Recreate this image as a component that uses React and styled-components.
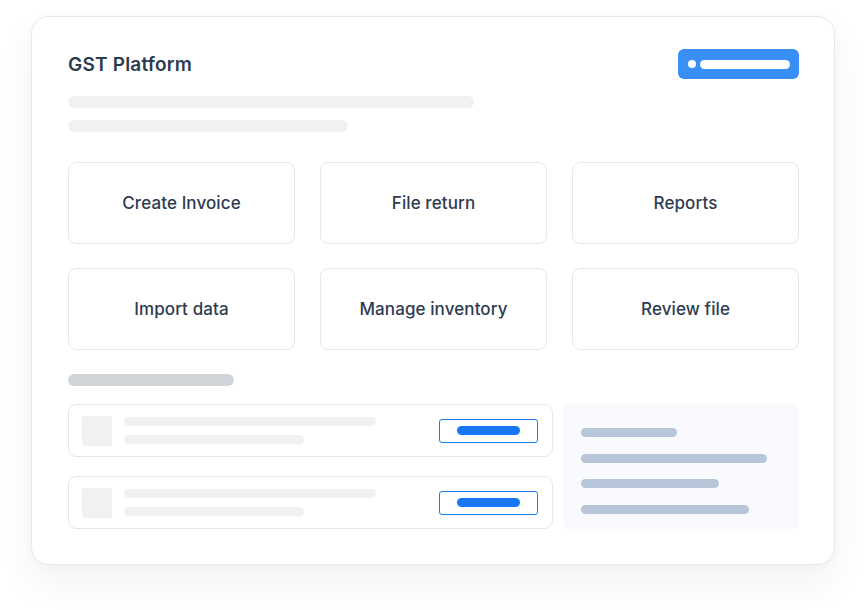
import React from "react";
import styled, { createGlobalStyle } from "styled-components";

const GlobalStyle = createGlobalStyle`
  html, body {
    margin: 0;
    padding: 0;
    background: #ffffff;
  }
  body {
    font-family: Inter, "Noto Sans", "Liberation Sans", sans-serif;
    color: #2c3a4f;
  }
`;

const tiles = [
  "Create Invoice",
  "File return",
  "Reports",
  "Import data",
  "Manage inventory",
  "Review file",
];

const panelLines = [96, 186, 138, 168];

const Page = styled.div`
  padding: 16px 0 0 31px;
  width: 866px;
  height: 610px;
  box-sizing: border-box;
  overflow: hidden;
`;

const Card = styled.div`
  width: 804px;
  height: 549px;
  box-sizing: border-box;
  padding: 32px 35px 0 36px;
  background: #ffffff;
  border: 1px solid #e7e9ef;
  border-radius: 18px;
  box-shadow: 0 18px 36px rgba(40, 52, 80, 0.06), 0 2px 8px rgba(40, 52, 80, 0.03);
`;

const Header = styled.div`
  display: flex;
  align-items: center;
  justify-content: space-between;
  height: 30px;
`;

const Title = styled.h1`
  margin: 0;
  font-size: 19px;
  font-weight: 600;
  letter-spacing: 0.2px;
  color: #2c3a4f;
`;

const Badge = styled.div`
  width: 121px;
  height: 30px;
  box-sizing: border-box;
  padding: 0 9px 0 10px;
  border-radius: 6px;
  background: #3a8ff7;
  display: flex;
  align-items: center;
  gap: 4px;
`;

const Dot = styled.span`
  width: 8px;
  height: 8px;
  border-radius: 50%;
  background: #ffffff;
  flex: none;
`;

const BadgeBar = styled.span`
  flex: 1;
  height: 9px;
  border-radius: 5px;
  background: #ffffff;
`;

const Lines = styled.div`
  display: flex;
  flex-direction: column;
  gap: 12px;
  margin-top: 17px;
`;

const Bar = styled.div`
  width: ${(p) => p.$w}px;
  height: ${(p) => p.$h || 9}px;
  border-radius: 6px;
  background: ${(p) => p.$color || "#f0f1f3"};
  flex: none;
`;

const TileGrid = styled.div`
  display: grid;
  grid-template-columns: repeat(3, 227px);
  grid-auto-rows: 82px;
  column-gap: 25px;
  row-gap: 24px;
  margin-top: 30px;
`;

const Tile = styled.div`
  box-sizing: border-box;
  border: 1.5px solid #e3e7ef;
  border-radius: 8px;
  display: flex;
  align-items: center;
  justify-content: center;
  font-size: 17px;
  font-weight: 500;
  letter-spacing: 0.1px;
  color: #2e3b51;
`;

const SectionBar = styled(Bar)`
  margin-top: 24px;
`;

const Bottom = styled.div`
  display: grid;
  grid-template-columns: 485px 236px;
  column-gap: 10px;
  margin-top: 18px;
`;

const List = styled.div`
  display: flex;
  flex-direction: column;
  gap: 19px;
`;

const Row = styled.div`
  height: 53px;
  box-sizing: border-box;
  border: 1.5px solid #e3e7ef;
  border-radius: 8px;
  display: flex;
  align-items: center;
  padding: 0 14px 0 13px;
`;

const Thumb = styled.div`
  width: 30px;
  height: 30px;
  border-radius: 3px;
  background: #f0f1f3;
  flex: none;
`;

const RowText = styled.div`
  display: flex;
  flex-direction: column;
  gap: 9px;
  margin-left: 12px;
  flex: 1;
`;

const Action = styled.div`
  width: 99px;
  height: 24px;
  box-sizing: border-box;
  border: 1.5px solid #1a7cf7;
  border-radius: 3px;
  display: flex;
  align-items: center;
  justify-content: center;
  flex: none;
`;

const Panel = styled.div`
  background: #f9fafd;
  border-radius: 6px;
  padding: 24px 18px 0;
  display: flex;
  flex-direction: column;
  gap: 16.5px;
`;

export default function App() {
  return (
    <>
      <GlobalStyle />
      <Page>
        <Card>
          <Header>
            <Title>GST Platform</Title>
            <Badge>
              <Dot />
              <BadgeBar />
            </Badge>
          </Header>

          <Lines>
            <Bar $w={406} $h={12} />
            <Bar $w={280} $h={12} />
          </Lines>

          <TileGrid>
            {tiles.map((t) => (
              <Tile key={t}>{t}</Tile>
            ))}
          </TileGrid>

          <SectionBar $w={166} $h={12} $color="#d1d5d9" />

          <Bottom>
            <List>
              {[0, 1].map((i) => (
                <Row key={i}>
                  <Thumb />
                  <RowText>
                    <Bar $w={252} />
                    <Bar $w={180} />
                  </RowText>
                  <Action>
                    <Bar $w={63} $color="#1777f6" />
                  </Action>
                </Row>
              ))}
            </List>
            <Panel>
              {panelLines.map((w, i) => (
                <Bar key={i} $w={w} $h={9} $color="#b8c6da" />
              ))}
            </Panel>
          </Bottom>
        </Card>
      </Page>
    </>
  );
}
